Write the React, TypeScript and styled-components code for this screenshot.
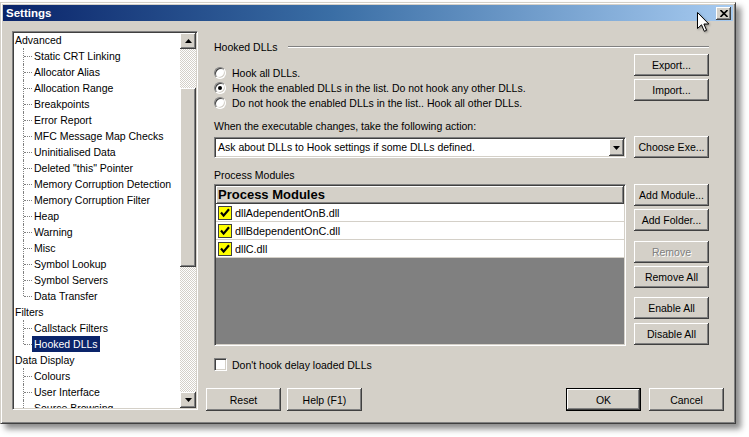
import React from 'react';
import styled, { createGlobalStyle, css } from 'styled-components';

const Global = createGlobalStyle`
  html, body { margin: 0; padding: 0; background: #fff; }
  body { font-family: "Liberation Sans", Arial, sans-serif; font-size: 10.5px; color: #000; }
  * { box-sizing: border-box; }
`;

const raised = css`
  box-shadow: inset -1px -1px 0 #404040, inset 1px 1px 0 #fff, inset -2px -2px 0 #808080, inset 2px 2px 0 #d4d0c8;
`;
const sunken = css`
  border: 1px solid;
  border-color: #808080 #fff #fff #808080;
  box-shadow: inset 1px 1px 0 #404040, inset -1px -1px 0 #d4d0c8;
`;

const Desktop = styled.div`
  position: relative;
  width: 749px;
  height: 437px;
  overflow: hidden;
  background: #fff;
  padding-top: 2px;
`;

const Window = styled.div`
  width: 736px;
  height: 422px;
  background: #d4d0c8;
  border: 1px solid;
  border-color: #d4d0c8 #404040 #404040 #d4d0c8;
  box-shadow: inset 1px 1px 0 #fff, inset -1px -1px 0 #808080, 5px 5px 6px rgba(0, 0, 0, 0.45);
  padding: 2px;
  display: flex;
  flex-direction: column;
`;

const TitleBar = styled.div`
  height: 16px;
  flex: none;
  display: flex;
  align-items: center;
  justify-content: space-between;
  padding: 0 2px 0 3px;
  background: linear-gradient(to right, #0a246a, #3a6ea5 45%, #a6caf0);
`;

const TitleText = styled.span`
  color: #fff;
  font-weight: bold;
  font-size: 11.5px;
  line-height: 16px;
`;

const CloseButton = styled.div`
  width: 15px;
  height: 13px;
  background: #d4d0c8;
  ${raised};
  display: flex;
  align-items: center;
  justify-content: center;
`;

const Client = styled.div`
  flex: 1;
  display: flex;
  padding: 10px 0 0 9px;
`;

const TreeBox = styled.div`
  width: 186px;
  height: 379px;
  flex: none;
  ${sunken};
  border-width: 1px;
  padding: 1px;
  background: #fff;
  display: flex;
`;

const TreeList = styled.div`
  flex: 1;
  overflow: hidden;
  margin-top: -1px;
`;

const TreeRow = styled.div<{ $child?: boolean }>`
  height: 16px;
  display: flex;
  align-items: center;
  padding-left: ${(p) => (p.$child ? '9px' : '0')};
  white-space: nowrap;
`;

const Connector = styled.span<{ $last?: boolean }>`
  position: relative;
  width: 9px;
  height: 16px;
  flex: none;
  &::before {
    content: '';
    position: absolute;
    left: 0;
    top: 0;
    height: ${(p) => (p.$last ? '8px' : '16px')};
    border-left: 1px dotted #808080;
  }
  &::after {
    content: '';
    position: absolute;
    left: 1px;
    top: 8px;
    width: 8px;
    border-top: 1px dotted #808080;
  }
`;

const TreeLabel = styled.span<{ $selected?: boolean; $child?: boolean }>`
  line-height: 16px;
  height: 16px;
  padding: ${(p) => (p.$child ? '0 2px' : '0 1px')};
  ${(p) =>
    p.$selected &&
    css`
      background: #0a246a;
      color: #fff;
    `}
`;

const ScrollBar = styled.div`
  width: 16px;
  flex: none;
  display: flex;
  flex-direction: column;
`;

const ScrollButton = styled.div`
  width: 16px;
  height: 16px;
  flex: none;
  background: #d4d0c8;
  ${raised};
  display: flex;
  align-items: center;
  justify-content: center;
`;

const ScrollTrack = styled.div`
  flex: 1;
  display: flex;
  flex-direction: column;
  background-color: #fff;
  background-image: repeating-conic-gradient(#d4d0c8 0 25%, #fff 0 50%);
  background-size: 2px 2px;
`;

const ScrollThumb = styled.div`
  width: 16px;
  background: #d4d0c8;
  ${raised};
`;

const RightColumn = styled.div`
  width: 518px;
  margin-left: 8px;
  display: flex;
  flex-direction: column;
`;

const Group = styled.div`
  padding-left: 8px;
  width: 503px;
  display: flex;
  flex-direction: column;
`;

const GroupHeader = styled.div`
  margin-top: 9px;
  height: 13px;
  display: flex;
  align-items: center;
`;

const HeaderLine = styled.div`
  flex: 1;
  margin-left: 10px;
  height: 2px;
  border-top: 1px solid #808080;
  border-bottom: 1px solid #fff;
`;

const Row = styled.div<{ $mt: number }>`
  display: flex;
  align-items: flex-start;
  gap: 8px;
  margin-top: ${(p) => p.$mt}px;
`;

const MainCol = styled.div<{ $pt?: number }>`
  width: 412px;
  flex: none;
  display: flex;
  flex-direction: column;
  padding-top: ${(p) => p.$pt ?? 0}px;
`;

const ButtonCol = styled.div`
  width: 75px;
  display: flex;
  flex-direction: column;
`;

const RadioRow = styled.label`
  height: 15px;
  display: flex;
  align-items: center;
  gap: 6px;
`;

const Radio = styled.span<{ $checked?: boolean }>`
  position: relative;
  width: 12px;
  height: 12px;
  flex: none;
  border-radius: 50%;
  background: #fff;
  border: 1px solid;
  border-color: #808080 #fff #fff #808080;
  box-shadow: inset 1px 1px 0 #404040, inset -1px -1px 0 #d4d0c8;
  ${(p) =>
    p.$checked &&
    css`
      &::after {
        content: '';
        position: absolute;
        left: 3px;
        top: 3px;
        width: 4px;
        height: 4px;
        border-radius: 50%;
        background: #000;
      }
    `}
`;

const Label = styled.div<{ $mt: number }>`
  margin-top: ${(p) => p.$mt}px;
  height: 13px;
  line-height: 13px;
`;

const Button = styled.div<{ $mt?: number; $disabled?: boolean; $default?: boolean; $w?: number; $h?: number }>`
  width: ${(p) => p.$w ?? 75}px;
  height: ${(p) => p.$h ?? 22}px;
  flex: none;
  margin-top: ${(p) => p.$mt ?? 0}px;
  background: #d4d0c8;
  ${raised};
  display: flex;
  align-items: center;
  justify-content: center;
  white-space: nowrap;
  ${(p) =>
    p.$disabled &&
    css`
      color: #808080;
      text-shadow: 1px 1px 0 #fff;
    `}
  ${(p) =>
    p.$default &&
    css`
      border: 1px solid #000;
    `}
`;

const Combo = styled.div`
  margin-top: 1px;
  width: 412px;
  height: 21px;
  ${sunken};
  padding: 1px;
  background: #fff;
  display: flex;
  align-items: center;
`;

const ComboText = styled.span`
  flex: 1;
  padding-left: 2px;
  line-height: 17px;
`;

const ComboButton = styled.div`
  width: 15px;
  height: 17px;
  background: #d4d0c8;
  ${raised};
  display: flex;
  align-items: center;
  justify-content: center;
`;

const ListBox = styled.div`
  width: 412px;
  height: 162px;
  ${sunken};
  padding: 1px;
  background: #808080;
  display: flex;
  flex-direction: column;
`;

const ListHeader = styled.div`
  height: 18px;
  flex: none;
  background: #d4d0c8;
  ${raised};
  font-weight: bold;
  font-size: 13px;
  line-height: 17px;
  padding-left: 2px;
`;

const ListRow = styled.div`
  height: 18px;
  flex: none;
  background: #fff;
  border-bottom: 1px solid #d4d0c8;
  display: flex;
  align-items: center;
  gap: 3px;
  padding-left: 2px;
  font-size: 10.8px;
`;

const CheckRow = styled.label`
  margin-top: 12px;
  height: 13px;
  display: flex;
  align-items: center;
  gap: 5px;
`;

const CheckBox = styled.span`
  width: 13px;
  height: 13px;
  flex: none;
  background: #fff;
  ${sunken};
`;

const BottomBar = styled.div`
  margin-top: 17px;
  display: flex;
  align-items: center;
`;

const Spacer = styled.div`
  flex: 1;
`;

const Cursor = styled.svg`
  position: absolute;
  left: 697px;
  top: 12px;
  filter: drop-shadow(1px 1px 1px rgba(0, 0, 0, 0.35));
`;

const UpArrow = () => (
  <svg width="7" height="4" viewBox="0 0 7 4">
    <path d="M3.5 0 L7 4 L0 4 Z" fill="#000" />
  </svg>
);
const DownArrow = () => (
  <svg width="7" height="4" viewBox="0 0 7 4">
    <path d="M0 0 L7 0 L3.5 4 Z" fill="#000" />
  </svg>
);

const YellowCheck = () => (
  <svg width="14" height="14" viewBox="0 0 14 14" style={{ flex: 'none' }}>
    <rect x="0.5" y="0.5" width="13" height="13" fill="#ffff00" stroke="#404040" />
    <path d="M3 6.5 L5.6 9.6 L11 3.2" fill="none" stroke="#000" strokeWidth="2.2" />
  </svg>
);

type Node = { label: string; children: string[]; open?: boolean };
const tree: Node[] = [
  {
    label: 'Advanced',
    children: [
      'Static CRT Linking',
      'Allocator Alias',
      'Allocation Range',
      'Breakpoints',
      'Error Report',
      'MFC Message Map Checks',
      'Uninitialised Data',
      'Deleted "this" Pointer',
      'Memory Corruption Detection',
      'Memory Corruption Filter',
      'Heap',
      'Warning',
      'Misc',
      'Symbol Lookup',
      'Symbol Servers',
      'Data Transfer',
    ],
  },
  { label: 'Filters', children: ['Callstack Filters', 'Hooked DLLs'] },
  { label: 'Data Display', children: ['Colours', 'User Interface', 'Source Browsing'], open: true },
];

const modules = ['dllAdependentOnB.dll', 'dllBdependentOnC.dll', 'dllC.dll'];

export default function App() {
  return (
    <>
      <Global />
      <Desktop>
        <Window>
          <TitleBar>
            <TitleText>Settings</TitleText>
            <CloseButton>
              <svg width="8" height="7" viewBox="0 0 8 7">
                <path d="M0.5 0 L7.5 7 M7.5 0 L0.5 7" stroke="#000" strokeWidth="1.6" />
              </svg>
            </CloseButton>
          </TitleBar>
          <Client>
            <TreeBox>
              <TreeList>
                {tree.map((n) => (
                  <React.Fragment key={n.label}>
                    <TreeRow>
                      <TreeLabel>{n.label}</TreeLabel>
                    </TreeRow>
                    {n.children.map((c, i) => (
                      <TreeRow $child key={c}>
                        <Connector $last={i === n.children.length - 1 && !n.open} />
                        <TreeLabel $child $selected={c === 'Hooked DLLs'}>
                          {c}
                        </TreeLabel>
                      </TreeRow>
                    ))}
                  </React.Fragment>
                ))}
              </TreeList>
              <ScrollBar>
                <ScrollButton>
                  <UpArrow />
                </ScrollButton>
                <ScrollTrack>
                  <ScrollThumb style={{ marginTop: 39, height: 179 }} />
                </ScrollTrack>
                <ScrollButton>
                  <DownArrow />
                </ScrollButton>
              </ScrollBar>
            </TreeBox>
            <RightColumn>
              <Group>
                <GroupHeader>
                  <span>Hooked DLLs</span>
                  <HeaderLine />
                </GroupHeader>
                <Row $mt={1}>
                  <MainCol $pt={11}>
                    <RadioRow>
                      <Radio />
                      <span>Hook all DLLs.</span>
                    </RadioRow>
                    <RadioRow>
                      <Radio $checked />
                      <span>Hook the enabled DLLs in the list. Do not hook any other DLLs.</span>
                    </RadioRow>
                    <RadioRow>
                      <Radio />
                      <span>Do not hook the enabled DLLs in the list.. Hook all other DLLs.</span>
                    </RadioRow>
                  </MainCol>
                  <ButtonCol>
                    <Button>Export...</Button>
                    <Button $mt={3}>Import...</Button>
                  </ButtonCol>
                </Row>
                <Label $mt={10}>When the executable changes, take the following action:</Label>
                <Row $mt={3}>
                  <Combo>
                    <ComboText>Ask about DLLs to Hook settings if some DLLs defined.</ComboText>
                    <ComboButton>
                      <DownArrow />
                    </ComboButton>
                  </Combo>
                  <Button>Choose Exe...</Button>
                </Row>
                <Label $mt={11}>Process Modules</Label>
                <Row $mt={2}>
                  <ListBox>
                    <ListHeader>Process Modules</ListHeader>
                    {modules.map((m) => (
                      <ListRow key={m}>
                        <YellowCheck />
                        <span>{m}</span>
                      </ListRow>
                    ))}
                  </ListBox>
                  <ButtonCol>
                    <Button>Add Module...</Button>
                    <Button $mt={3}>Add Folder...</Button>
                    <Button $mt={10} $disabled>
                      Remove
                    </Button>
                    <Button $mt={3}>Remove All</Button>
                    <Button $mt={9}>Enable All</Button>
                    <Button $mt={4}>Disable All</Button>
                  </ButtonCol>
                </Row>
                <CheckRow>
                  <CheckBox />
                  <span>Don't hook delay loaded DLLs</span>
                </CheckRow>
              </Group>
              <BottomBar>
                <Button $h={23}>Reset</Button>
                <Button $h={23} style={{ marginLeft: 6 }}>
                  Help (F1)
                </Button>
                <Spacer />
                <Button $h={23} $default>
                  OK
                </Button>
                <Button $h={23} style={{ marginLeft: 8 }}>
                  Cancel
                </Button>
              </BottomBar>
            </RightColumn>
          </Client>
        </Window>
        <Cursor width="13" height="21" viewBox="0 0 13 21">
          <path d="M0.5 0.5 L0.5 16.5 L4.5 12.8 L7.3 19.3 L9.6 18.3 L6.9 12 L11.8 12 Z" fill="#fff" stroke="#000" strokeWidth="1" />
        </Cursor>
      </Desktop>
    </>
  );
}
